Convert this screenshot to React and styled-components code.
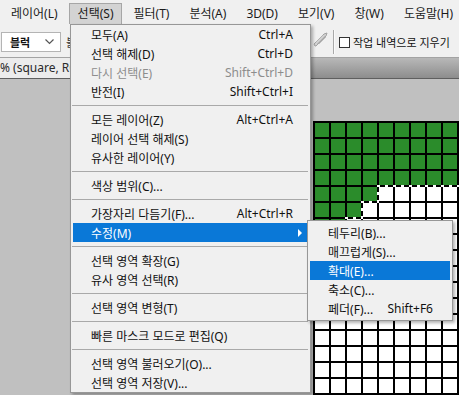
import React from 'react';
import styled, { createGlobalStyle } from 'styled-components';

const GlobalStyle = createGlobalStyle`
  html, body {
    margin: 0;
    padding: 0;
    background: #c0c0c0;
  }
  body {
    font-family: "Noto Sans", "Noto Sans CJK KR", sans-serif;
  }
`;

const menuBarItems = ['레이어(L)', '선택(S)', '필터(T)', '분석(A)', '3D(D)', '보기(V)', '창(W)', '도움말(H)'];

// 선택 메뉴
const selectMenu = [
  { label: '모두(A)', key: 'Ctrl+A' },
  { label: '선택 해제(D)', key: 'Ctrl+D' },
  { label: '다시 선택(E)', key: 'Shift+Ctrl+D', disabled: true },
  { label: '반전(I)', key: 'Shift+Ctrl+I' },
  'sep',
  { label: '모든 레이어(Z)', key: 'Alt+Ctrl+A' },
  { label: '레이어 선택 해제(S)' },
  { label: '유사한 레이어(Y)' },
  'sep',
  { label: '색상 범위(C)...' },
  'sep',
  { label: '가장자리 다듬기(F)...', key: 'Alt+Ctrl+R' },
  { label: '수정(M)', sub: true, active: true },
  'sep',
  { label: '선택 영역 확장(G)' },
  { label: '유사 영역 선택(R)' },
  'sep',
  { label: '선택 영역 변형(T)' },
  'sep',
  { label: '빠른 마스크 모드로 편집(Q)' },
  'sep',
  { label: '선택 영역 불러오기(O)...' },
  { label: '선택 영역 저장(V)...' },
];

// 수정 하위 메뉴
const modifyMenu = [
  { label: '테두리(B)...' },
  { label: '매끄럽게(S)...' },
  { label: '확대(E)...', active: true },
  { label: '축소(C)...' },
  { label: '페더(F)...', key: 'Shift+F6' },
];

// 격자 - 행마다 초록 칸 수
const CELL = 16;
const COLS = 10;
const ROWS = 18;
const greenPerRow = [10, 10, 10, 10, 4, 3, 2, 2, 1, 0, 0, 0, 0, 0, 0, 0, 0, 0];

function GridCanvas() {
  const w = COLS * CELL;
  const h = ROWS * CELL;
  const cells = [];
  greenPerRow.forEach((n, r) => {
    if (n > 0) {
      cells.push(<rect key={`g${r}`} x={0} y={r * CELL} width={n * CELL} height={CELL} fill="#2b8c2b" />);
    }
  });
  const lines = [];
  for (let i = 0; i <= COLS; i++) {
    lines.push(<rect key={`v${i}`} x={i * CELL} y={0} width={2} height={h} fill="#000" />);
  }
  for (let j = 0; j <= ROWS; j++) {
    lines.push(<rect key={`h${j}`} x={0} y={j * CELL} width={w} height={2} fill="#000" />);
  }
  const edge = 'M160 65 H65 V81 H49 V97 H33 V129 H17 V145 H0';
  return (
    <svg width={w} height={h} viewBox={`0 0 ${w} ${h}`}>
      <rect width={w} height={h} fill="#fff" />
      {cells}
      {lines}
      <path d={edge} fill="none" stroke="#fff" strokeWidth="2" />
      <path d={edge} fill="none" stroke="#000" strokeWidth="2" strokeDasharray="5 3" />
    </svg>
  );
}

export default function App() {
  return (
    <>
      <GlobalStyle />
      <Screen>
        {/* 메뉴 바 */}
        <MenuBar>
          {menuBarItems.map(label => (
            <MenuBarItem key={label} $open={label === '선택(S)'}>
              {label}
            </MenuBarItem>
          ))}
        </MenuBar>

        {/* 옵션 바 */}
        <OptionsBar>
          <ModeSelect>
            <span>블럭</span>
            <svg width="9" height="6" viewBox="0 0 9 6">
              <polyline points="0.5,0.5 4.5,4.5 8.5,0.5" fill="none" stroke="#555" strokeWidth="1.2" />
            </svg>
          </ModeSelect>
          <OptionLabel>블</OptionLabel>
          <RightGroup>
            <ToolIcon width="16" height="16" viewBox="0 0 16 16">
              <path d="M2 14 L1 12 L11 2 L14 1 L13 4 L3 14 Z" fill="#d2d2d2" stroke="#a3a3a3" strokeWidth="1" />
              <path d="M4 12 L12 4 M6 12 L13 5 M3 10 L10 3" stroke="#b4b4b4" strokeWidth="0.8" />
            </ToolIcon>
            <VDivider />
            <CheckBox />
            <CheckLabel>작업 내역으로 지우기</CheckLabel>
          </RightGroup>
        </OptionsBar>

        {/* 문서 탭 */}
        <DocTabs>
          <DocTab>% (square, RG</DocTab>
        </DocTabs>

        {/* 작업 영역 */}
        <Workspace>
          <GridCanvas />
        </Workspace>

        {/* 선택 드롭다운 */}
        <DropMenu>
          {selectMenu.map((item, i) =>
            item === 'sep' ? (
              <MenuSep key={`s${i}`} />
            ) : (
              <MenuItem key={item.label} $active={item.active} $disabled={item.disabled}>
                <span>{item.label}</span>
                {item.key && <span>{item.key}</span>}
                {item.sub && <SubArrow />}
              </MenuItem>
            )
          )}
        </DropMenu>

        {/* 수정 하위 메뉴 */}
        <SubMenu>
          {modifyMenu.map(item => (
            <SubItem key={item.label} $active={item.active}>
              <span>{item.label}</span>
              {item.key && <span>{item.key}</span>}
            </SubItem>
          ))}
        </SubMenu>
      </Screen>
    </>
  );
}

const Screen = styled.div`
  position: relative;
  width: 459px;
  height: 395px;
  overflow: hidden;
  display: flex;
  flex-direction: column;
  background: #c0c0c0;
`;

const MenuBar = styled.div`
  display: flex;
  align-items: flex-end;
  height: 24px;
  padding-left: 1px;
  background: #f0f0f0;
  box-sizing: border-box;
`;

const MenuBarItem = styled.div`
  height: 21px;
  line-height: 20px;
  padding: 0 8px;
  margin: 0 1px;
  font-size: 12px;
  color: #1a1a1a;
  white-space: nowrap;
  box-sizing: border-box;
  border: 1px solid ${props => (props.$open ? '#a6a6a6' : 'transparent')};
  border-bottom: none;
  background: ${props => (props.$open ? '#d3d3d3' : 'transparent')};
`;

const OptionsBar = styled.div`
  display: flex;
  align-items: center;
  height: 34px;
  padding: 2px 0 0 1px;
  background: #f0f0f0;
  border-bottom: 1px solid #a3a3a3;
  box-sizing: border-box;
  overflow: hidden;
`;

const ModeSelect = styled.div`
  display: flex;
  align-items: center;
  justify-content: space-between;
  width: 60px;
  height: 20px;
  padding: 0 6px 0 8px;
  background: #fff;
  border: 1px solid #b4b4b4;
  box-sizing: border-box;
  font-size: 11px;
  font-weight: 700;
  color: #111;
`;

const OptionLabel = styled.span`
  flex: none;
  width: 4px;
  margin-left: 5px;
  overflow: hidden;
  font-size: 11px;
  color: #333;
  white-space: nowrap;
`;

const RightGroup = styled.div`
  display: flex;
  align-items: center;
  flex: 0 0 146px;
  margin-left: auto;
  overflow: hidden;
  white-space: nowrap;
`;

const ToolIcon = styled.svg`
  flex: none;
  margin-top: -3px;
`;

const VDivider = styled.div`
  flex: none;
  width: 1px;
  height: 24px;
  margin: 0 4px 0 4px;
  background: #a9a9a9;
  box-shadow: 1px 0 0 #fafafa;
`;

const CheckBox = styled.div`
  flex: none;
  width: 11px;
  height: 11px;
  margin-left: 1px;
  margin-right: 3px;
  margin-top: 2px;
  border: 1px solid #333;
  background: #fff;
  box-sizing: border-box;
`;

const CheckLabel = styled.span`
  font-size: 11px;
  color: #111;
`;

const DocTabs = styled.div`
  display: flex;
  height: 21px;
  background: linear-gradient(#b8b8b8, #8d8d8d);
  border-bottom: 1px solid #5f5f5f;
  box-sizing: border-box;
`;

const DocTab = styled.div`
  width: 200px;
  height: 20px;
  line-height: 20px;
  background: #ececec;
  font-size: 12px;
  color: #2a2a2a;
  white-space: nowrap;
  overflow: hidden;
`;

const Workspace = styled.div`
  flex: 1;
  padding: 42px 0 0 313px;
  background: #c0c0c0;
  overflow: hidden;
  svg {
    display: block;
  }
`;

const DropMenu = styled.div`
  position: absolute;
  left: 70px;
  top: 24px;
  width: 241px;
  padding: 0 3px 0 2px;
  background: #f0f0f0;
  border: 1px solid #979797;
  box-shadow: 2px 2px 3px rgba(0, 0, 0, 0.3);
  box-sizing: border-box;
`;

const MenuItem = styled.div`
  display: flex;
  align-items: center;
  justify-content: space-between;
  height: 19px;
  padding: 0 14px 0 18px;
  font-size: 12px;
  white-space: nowrap;
  background: ${props => (props.$active ? '#0a78d7' : 'transparent')};
  color: ${props => (props.$active ? '#fff' : props.$disabled ? '#8d8d8d' : '#111')};
`;

const SubArrow = styled.span`
  width: 0;
  height: 0;
  margin-right: -9px;
  border-left: 4px solid currentColor;
  border-top: 4px solid transparent;
  border-bottom: 4px solid transparent;
`;

const MenuSep = styled.div`
  display: flex;
  align-items: center;
  height: 9px;
  margin: 0 -1px;
  &::after {
    content: '';
    flex: 1;
    height: 1px;
    background: #a9a9a9;
  }
`;

const SubMenu = styled.div`
  position: absolute;
  left: 307px;
  top: 220px;
  width: 146px;
  padding: 2px;
  background: #f0f0f0;
  border: 1px solid #979797;
  box-shadow: 2px 2px 3px rgba(0, 0, 0, 0.3);
  box-sizing: border-box;
`;

const SubItem = styled(MenuItem)`
  padding: 0 17px 0 18px;
`;
